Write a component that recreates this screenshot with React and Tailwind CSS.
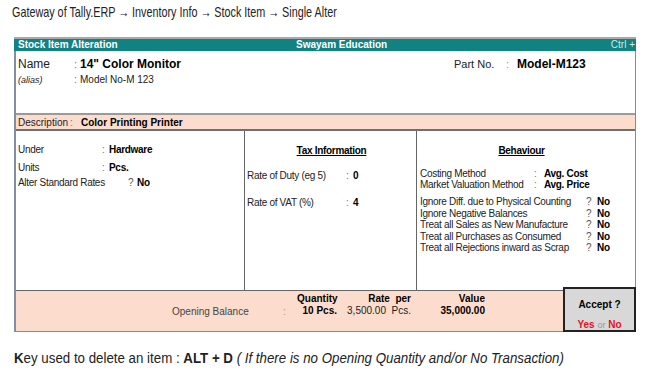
import React from 'react';

const font = { fontFamily: '"Liberation Sans", Arial, sans-serif' };

// one label : value row in the Tally form
const Row = ({ label, labelW, sepW = 7, value, className = '' }) => (
  <div className={`flex items-baseline ${className}`}>
    <span className="shrink-0" style={{ width: labelW }}>{label}</span>
    <span className="shrink-0 text-[#777]" style={{ width: sepW }}>:</span>
    <span className="font-bold text-black">{value}</span>
  </div>
);

export default function App() {
  return (
    <div className="w-[646px] h-[376px] bg-white text-[#222] overflow-hidden" style={font}>
      {/* breadcrumb */}
      <div className="h-[37px] pl-[12px] pt-[2px]">
        <p className="text-[15px] leading-[20px] origin-left scale-x-[0.72] whitespace-nowrap">
          Gateway of Tally.ERP → Inventory Info → Stock Item → Single Alter
        </p>
      </div>

      {/* Tally screen */}
      <div className="relative ml-[14px] w-[622px] border-t-2 border-[#a9a9a9]">
        <div className="h-[12px] bg-[#108281] flex items-center text-white text-[10px] leading-none font-bold pl-[4px]">
          <span className="w-[278px]">Stock Item Alteration</span>
          <span className="flex-1">Swayam Education</span>
          <span className="font-normal text-[#cfe8e8] pr-[1px] whitespace-nowrap">Ctrl +</span>
        </div>

        <div className="border-l-2 border-r border-b border-[#7f8fa6] border-r-[#8a8a8a] border-b-[#8a8a8a]">
          {/* name block */}
          <div className="h-[62px] flex pt-[4px] pl-[2px]">
            <div className="w-[436px]">
              <div className="flex items-baseline">
                <span className="w-[56px] text-[12px]">Name</span>
                <span className="w-[6px] text-[11px] text-[#777]">:</span>
                <span className="text-[12px] font-bold text-black">14" Color Monitor</span>
              </div>
              <div className="flex items-baseline -mt-[1px]">
                <span className="w-[56px] text-[9px] italic">(alias)</span>
                <span className="w-[6px] text-[10px] text-[#777]">:</span>
                <span className="text-[10px]">Model No-M 123</span>
              </div>
            </div>
            <div className="flex items-baseline">
              <span className="w-[52px] text-[11px]">Part No.</span>
              <span className="w-[11px] text-[11px] text-[#999]">:</span>
              <span className="text-[12px] font-bold text-black">Model-M123</span>
            </div>
          </div>

          {/* description */}
          <div className="h-[18px] bg-[#fcdccc] border-t-2 border-b-2 border-t-[#9a9a9a] border-b-[#6f6f6f] flex items-center pl-[2px] text-[10px]">
            <span className="w-[52px]">Description</span>
            <span className="w-[11px] text-[#777]">:</span>
            <span className="font-bold text-black">Color Printing Printer</span>
          </div>

          {/* three columns */}
          <div className="h-[159px] flex text-[10px] tracking-[-0.3px]">
            <div className="w-[229px] border-r border-[#666] pl-[2px] pt-[11px]">
              <Row label="Under" labelW={84} value="Hardware" />
              <Row label="Units" labelW={84} value="Pcs." className="mt-[3px]" />
              <div className="flex items-baseline">
                <span className="w-[110px]">Alter Standard Rates</span>
                <span className="w-[9px] text-[#555]">?</span>
                <span className="font-bold text-black">No</span>
              </div>
            </div>
            <div className="w-[172px] border-r border-[#666] pl-[2px] pt-[12px]">
              <p className="text-center font-bold underline text-black">Tax Information</p>
              <Row label="Rate of Duty (eg 5)" labelW={99} value="0" className="mt-[10px]" />
              <Row label="Rate of VAT (%)" labelW={99} value="4" className="mt-[12px]" />
            </div>
            <div className="flex-1 pl-[3px] pt-[12px]">
              <p className="text-center font-bold underline text-black pr-[12px]">Behaviour</p>
              <div className="mt-[10px] leading-[11px]">
                <Row label="Costing Method" labelW={114} sepW={10} value="Avg. Cost" />
                <Row label="Market Valuation Method" labelW={114} sepW={10} value="Avg. Price" />
              </div>
              <div className="mt-[6px] leading-[11.5px]">
                {[
                  'Ignore Diff. due to Physical Counting',
                  'Ignore Negative Balances',
                  'Treat all Sales as New Manufacture',
                  'Treat all Purchases as Consumed',
                  'Treat all Rejections inward as Scrap',
                ].map((t) => (
                  <div key={t} className="flex items-baseline">
                    <span className="w-[166px]">{t}</span>
                    <span className="w-[11px] text-[#555]">?</span>
                    <span className="font-bold text-black">No</span>
                  </div>
                ))}
              </div>
            </div>
          </div>

          {/* opening balance */}
          <div className="h-[41px] bg-[#fcdccc] border-t border-[#666] flex text-[10px] leading-[12px] pt-[2px]">
            <span className="w-[156px]" />
            <div className="w-[111px] pt-[13px] text-[#444]">Opening Balance</div>
            <div className="w-[14px] pt-[13px] text-[#999]">:</div>
            <div className="w-[40px] text-right font-bold text-black">
              <div>Quantity</div>
              <div>10 Pcs.</div>
            </div>
            <div className="w-[74px] text-right">
              <div className="font-bold text-black">Rate&nbsp;&nbsp;per</div>
              <div>3,500.00&nbsp;&nbsp;Pcs.</div>
            </div>
            <div className="w-[74px] text-right font-bold text-black">
              <div>Value</div>
              <div>35,000.00</div>
            </div>
          </div>
        </div>

        {/* accept box */}
        <div className="absolute right-0 top-[248px] w-[73px] h-[45px] bg-[#d8d8d8] border-2 border-[#222] flex flex-col items-center text-[10px] leading-none font-bold">
          <span className="mt-[11px] text-black">Accept ?</span>
          <span className="mt-[10px] text-[#e4131c]">
            Yes <span className="font-normal text-[#999] text-[9px]">or</span> No
          </span>
        </div>
      </div>

      {/* note */}
      <p className="mt-[17px] ml-[14px] text-[14px] leading-[18px] whitespace-nowrap origin-left scale-x-[0.95]">
        <span className="font-bold">K</span>ey used to delete an item : <span className="font-bold">ALT + D</span>{' '}
        <span className="italic">( If there is no Opening Quantity and/or No Transaction)</span>
      </p>
    </div>
  );
}
